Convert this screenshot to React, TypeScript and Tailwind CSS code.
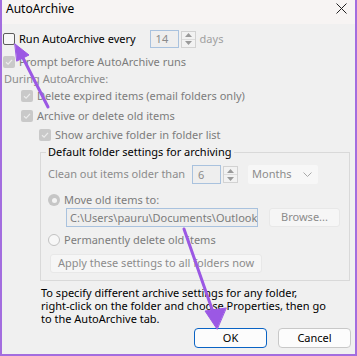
import React from 'react';

const font = { fontFamily: '"Noto Sans", "Liberation Sans", sans-serif' };

function Check({ checked, disabled }: { checked?: boolean; disabled?: boolean }) {
  if (disabled) {
    return (
      <span className="w-[12px] h-[12px] rounded-[2px] bg-[#c9c9c9] flex items-center justify-center shrink-0">
        {checked && (
          <svg width="8" height="8" viewBox="0 0 8 8">
            <path d="M1 4.2 L3.1 6.2 L7 1.8" fill="none" stroke="#ececec" strokeWidth="1.2" />
          </svg>
        )}
      </span>
    );
  }
  return <span className="w-[12px] h-[12px] rounded-[2px] border border-[#5c5c5c] bg-[#f7f7f7] shrink-0" />;
}

function Radio({ selected }: { selected?: boolean }) {
  if (selected) {
    return (
      <span className="w-[12px] h-[12px] rounded-full bg-[#c6c6c6] flex items-center justify-center shrink-0">
        <span className="w-[5px] h-[5px] rounded-full bg-[#f4f4f4]" />
      </span>
    );
  }
  return <span className="w-[12px] h-[12px] rounded-full border border-[#c2c2c2] bg-[#f7f7f7] shrink-0" />;
}

function Spinner() {
  return (
    <span className="w-[15px] h-[17px] border border-[#d2d2d2] bg-[#f2f2f2] flex flex-col shrink-0">
      <span className="flex-1 flex items-center justify-center border-b border-[#dcdcdc]">
        <svg width="7" height="4" viewBox="0 0 7 4"><path d="M0 4 L3.5 0 L7 4 Z" fill="#9a9a9a" /></svg>
      </span>
      <span className="flex-1 flex items-center justify-center">
        <svg width="7" height="4" viewBox="0 0 7 4"><path d="M0 0 L3.5 4 L7 0 Z" fill="#9a9a9a" /></svg>
      </span>
    </span>
  );
}

export default function App() {
  return (
    <div style={font} className="relative w-[357px] h-[356px] bg-[#f0f0f0] border-x-2 border-b-2 border-[#a36ddf] overflow-hidden text-[11px] text-black">
      {/* Title bar */}
      <div className="h-[24px] bg-[#f7f4f3] flex items-start justify-between pl-[4px] pr-[8px] pt-[1px]">
        <span className="text-[12px] leading-[15px]">AutoArchive</span>
        <svg width="11" height="11" viewBox="0 0 11 11" className="mt-[2px]">
          <path d="M0.5 0.5 L10.5 10.5 M10.5 0.5 L0.5 10.5" stroke="#222" strokeWidth="1" />
        </svg>
      </div>

      <div className="flex flex-col pl-[1px]">
        <div className="mt-[6px] h-[18px] flex items-center">
          <Check />
          <span className="ml-[4px] leading-[16px]">Run AutoArchive every</span>
          <span className="ml-[14px] w-[29px] h-[18px] border border-[#a9c2de] bg-[#eeeeee] text-[#8a8a8a] pl-[5px] leading-[16px]">14</span>
          <span className="ml-[2px]"><Spinner /></span>
          <span className="ml-[4px] text-[#a0a0a0] leading-[16px]">days</span>
        </div>

        <div className="mt-[6px] h-[16px] flex items-center text-[#7c7c7c]">
          <Check checked disabled />
          <span className="ml-[4px]">Prompt before AutoArchive runs</span>
        </div>

        <div className="mt-[1px] h-[16px] flex items-center text-[#8c8c8c] pl-[1px]">During AutoArchive:</div>

        <div className="mt-[1px] h-[16px] flex items-center text-[#7c7c7c] pl-[18px]">
          <Check checked disabled />
          <span className="ml-[4px]">Delete expired items (email folders only)</span>
        </div>

        <div className="mt-[4px] h-[16px] flex items-center text-[#7c7c7c] pl-[18px]">
          <Check checked disabled />
          <span className="ml-[4px]">Archive or delete old items</span>
        </div>

        <div className="mt-[3px] h-[16px] flex items-center text-[#7c7c7c] pl-[36px]">
          <Check checked disabled />
          <span className="ml-[4px]">Show archive folder in folder list</span>
        </div>

        {/* Group box */}
        <div className="relative mt-[9px] ml-[37px] mr-[5px] border border-[#d9d9d9] pl-[7px] pr-[8px] pb-[7px] flex flex-col">
          <span className="absolute -top-[9px] left-[5px] px-[2px] bg-[#f0f0f0] leading-[16px]">Default folder settings for archiving</span>

          <div className="mt-[12px] h-[19px] flex items-center text-[#8c8c8c]">
            <span className="w-[138px]">Clean out items older than</span>
            <span className="ml-[6px] w-[29px] h-[19px] border border-[#a9c2de] bg-[#eeeeee] pl-[5px] leading-[17px]">6</span>
            <span className="ml-[2px]"><Spinner /></span>
            <span className="ml-[10px] w-[70px] h-[19px] rounded-[2px] bg-[#f7f7f7] flex items-center justify-between pl-[4px] pr-[6px]">
              Months
              <svg width="9" height="5" viewBox="0 0 9 5"><path d="M0.5 0.5 L4.5 4.5 L8.5 0.5" fill="none" stroke="#a8a8a8" /></svg>
            </span>
          </div>

          <div className="mt-[8px] h-[16px] flex items-center text-[#7c7c7c]">
            <Radio selected />
            <span className="ml-[4px]">Move old items to:</span>
          </div>

          <div className="h-[19px] flex items-center">
            <span className="ml-[18px] w-[192px] h-[19px] border border-[#a9c2de] bg-[#eeeeee] text-[#7c7c7c] pl-[3px] leading-[17px] overflow-hidden whitespace-nowrap">C:\Users\pauru\Documents\Outlook</span>
            <span className="ml-[11px] w-[71px] h-[19px] rounded-[3px] border border-[#e8e8e8] bg-[#f6f6f6] text-[#8c8c8c] flex items-center justify-center">Browse...</span>
          </div>

          <div className="mt-[5px] h-[16px] flex items-center text-[#7c7c7c]">
            <Radio />
            <span className="ml-[4px]">Permanently delete old items</span>
          </div>

          <div className="mt-[6px] ml-[2px] w-[212px] h-[19px] rounded-[3px] border border-[#e8e8e8] bg-[#f6f6f6] text-[#8c8c8c] flex items-center justify-center whitespace-nowrap">
            Apply these settings to all folders now
          </div>
        </div>

        <p className="mt-[5px] ml-[38px] leading-[13px] whitespace-nowrap">
          To specify different archive settings for any folder,<br />
          right-click on the folder and choose Properties, then go<br />
          to the AutoArchive tab.
        </p>

        <div className="mt-[3px] flex justify-end gap-[11px] pr-[4px]">
          <span className="w-[73px] h-[20px] rounded-[4px] border border-[#0a63c4] bg-[#fcfcfc] flex items-center justify-center">OK</span>
          <span className="w-[73px] h-[20px] rounded-[4px] border border-[#c8c8c8] bg-[#fcfcfc] flex items-center justify-center">Cancel</span>
        </div>
      </div>

      {/* Annotation arrows */}
      <svg className="absolute left-0 top-0 pointer-events-none" width="357" height="356" viewBox="0 0 357 356">
        <g fill="#9b58e4" stroke="#9b58e4" strokeWidth="3" strokeLinecap="round">
          <line x1="46" y1="107" x2="21" y2="58" />
          <polygon points="13,44 27,55 15,61" strokeWidth="1" strokeLinejoin="round" />
          <line x1="182" y1="229" x2="211" y2="312" />
          <polygon points="215,329 203,311 224,308" strokeWidth="1" strokeLinejoin="round" />
        </g>
      </svg>
    </div>
  );
}
